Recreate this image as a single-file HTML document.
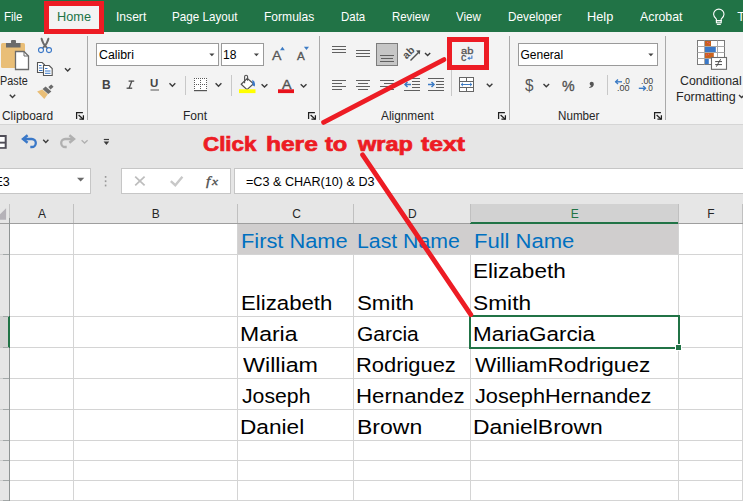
<!DOCTYPE html>
<html><head><meta charset="utf-8"><style>
html,body{margin:0;padding:0;}
body{width:743px;height:501px;overflow:hidden;position:relative;background:#fff;font-family:"Liberation Sans",sans-serif;}
.t{position:absolute;white-space:pre;transform-origin:0 0;}
.a{position:absolute;}
.ov{position:absolute;left:0;top:0;}

</style></head><body>
<!-- tab bar -->
<div class=a style="left:0;top:0;width:743px;height:32px;background:#217346"></div>
<div class=a style="left:49px;top:6px;width:50px;height:26px;background:#f3f3f3"></div>
<!-- ribbon -->
<div class=a style="left:0;top:32px;width:743px;height:92px;background:#f3f3f3"></div>
<div class=a style="left:0;top:124px;width:743px;height:1px;background:#d5d5d5"></div>
<!-- QAT + formula area -->
<div class=a style="left:0;top:125px;width:743px;height:79px;background:#e6e6e6"></div>
<!-- name box -->
<div class=a style="left:-5px;top:168px;width:94px;height:24px;background:#fff;border:1px solid #c6c6c6"></div>
<div class=a style="left:121px;top:168px;width:108px;height:24px;background:#fff;border:1px solid #c6c6c6"></div>
<div class=a style="left:234px;top:168px;width:520px;height:24px;background:#fff;border:1px solid #c6c6c6"></div>
<!-- column header -->
<div class=a style="left:0;top:204px;width:743px;height:19px;background:#e6e6e6"></div>
<div class=a style="left:470px;top:204px;width:208px;height:19px;background:#d2d2d2"></div>
<div class=a style="left:0;top:223px;width:743px;height:1px;background:#9e9e9e"></div>
<div class=a style="left:470px;top:222px;width:208px;height:2px;background:#217346"></div>
<!-- row header -->
<div class=a style="left:0;top:224px;width:9px;height:277px;background:#e6e6e6"></div>
<div class=a style="left:0;top:317px;width:9px;height:30px;background:#d2d2d2"></div>
<div class=a style="left:9px;top:204px;width:1px;height:14px;background:#c4c4c4"></div><div class=a style="left:9px;top:218px;width:1px;height:283px;background:#8f9494"></div>
<div class=a style="left:8px;top:316px;width:2px;height:32px;background:#217346"></div>
<!-- grid -->
<div class=a style="left:73px;top:204px;width:1px;height:19px;background:#c0c0c0"></div>
<div class=a style="left:73px;top:224px;width:1px;height:277px;background:#d4d4d4"></div>
<div class=a style="left:237px;top:204px;width:1px;height:19px;background:#c0c0c0"></div>
<div class=a style="left:237px;top:224px;width:1px;height:277px;background:#d4d4d4"></div>
<div class=a style="left:353px;top:204px;width:1px;height:19px;background:#c0c0c0"></div>
<div class=a style="left:353px;top:224px;width:1px;height:277px;background:#d4d4d4"></div>
<div class=a style="left:470px;top:204px;width:1px;height:19px;background:#c0c0c0"></div>
<div class=a style="left:470px;top:224px;width:1px;height:277px;background:#d4d4d4"></div>
<div class=a style="left:678px;top:204px;width:1px;height:19px;background:#c0c0c0"></div>
<div class=a style="left:678px;top:224px;width:1px;height:277px;background:#d4d4d4"></div>
<div class=a style="left:742px;top:204px;width:1px;height:19px;background:#c0c0c0"></div>
<div class=a style="left:742px;top:224px;width:1px;height:277px;background:#d4d4d4"></div>
<div class=a style="left:0;top:254px;width:3px;height:1px;background:#cdcdcd"></div><div class=a style="left:3px;top:254px;width:6px;height:1px;background:#a3a8a8"></div>
<div class=a style="left:10px;top:254px;width:733px;height:1px;background:#d4d4d4"></div>
<div class=a style="left:0;top:316px;width:3px;height:1px;background:#cdcdcd"></div><div class=a style="left:3px;top:316px;width:6px;height:1px;background:#a3a8a8"></div>
<div class=a style="left:10px;top:316px;width:733px;height:1px;background:#d4d4d4"></div>
<div class=a style="left:0;top:347px;width:3px;height:1px;background:#cdcdcd"></div><div class=a style="left:3px;top:347px;width:6px;height:1px;background:#a3a8a8"></div>
<div class=a style="left:10px;top:347px;width:733px;height:1px;background:#d4d4d4"></div>
<div class=a style="left:0;top:378px;width:3px;height:1px;background:#cdcdcd"></div><div class=a style="left:3px;top:378px;width:6px;height:1px;background:#a3a8a8"></div>
<div class=a style="left:10px;top:378px;width:733px;height:1px;background:#d4d4d4"></div>
<div class=a style="left:0;top:409px;width:3px;height:1px;background:#cdcdcd"></div><div class=a style="left:3px;top:409px;width:6px;height:1px;background:#a3a8a8"></div>
<div class=a style="left:10px;top:409px;width:733px;height:1px;background:#d4d4d4"></div>
<div class=a style="left:0;top:440px;width:3px;height:1px;background:#cdcdcd"></div><div class=a style="left:3px;top:440px;width:6px;height:1px;background:#a3a8a8"></div>
<div class=a style="left:10px;top:440px;width:733px;height:1px;background:#d4d4d4"></div>
<div class=a style="left:0;top:460px;width:3px;height:1px;background:#cdcdcd"></div><div class=a style="left:3px;top:460px;width:6px;height:1px;background:#a3a8a8"></div>
<div class=a style="left:10px;top:460px;width:733px;height:1px;background:#d4d4d4"></div>
<div class=a style="left:0;top:480px;width:3px;height:1px;background:#cdcdcd"></div><div class=a style="left:3px;top:480px;width:6px;height:1px;background:#a3a8a8"></div>
<div class=a style="left:10px;top:480px;width:733px;height:1px;background:#d4d4d4"></div>
<div class=a style="left:0;top:500px;width:3px;height:1px;background:#cdcdcd"></div><div class=a style="left:3px;top:500px;width:6px;height:1px;background:#a3a8a8"></div>
<div class=a style="left:10px;top:500px;width:733px;height:1px;background:#d4d4d4"></div>
<!-- header fill row 1 -->
<div class=a style="left:238px;top:224px;width:440px;height:30px;background:#d0cece"></div>
<!-- selection -->
<div class=a style="left:469px;top:315px;width:207px;height:30px;border:2px solid #217346"></div>
<div class=a style="left:675px;top:344px;width:5px;height:5px;background:#217346;border:1px solid #fff"></div>

<svg class=ov width="743" height="501" viewBox="0 0 743 501"><g fill="none" stroke-linecap="butt">
<!-- separators -->
<g stroke="#a9a9a9" stroke-width="1">
<line x1="87.5" y1="36" x2="87.5" y2="120"/>
<line x1="319.5" y1="36" x2="319.5" y2="120"/>
<line x1="509.5" y1="36" x2="509.5" y2="120"/>
<line x1="665.5" y1="36" x2="665.5" y2="120"/>
</g>
<g stroke="#c8c8c8" stroke-width="1">
<line x1="185.5" y1="76" x2="185.5" y2="95"/>
<line x1="231.5" y1="75" x2="231.5" y2="96"/>
<line x1="451.5" y1="70" x2="451.5" y2="96"/>
<line x1="607.5" y1="75" x2="607.5" y2="95"/>
</g>
<!-- launchers -->
<g stroke="#1f1f1f" stroke-width="1.25"><path d="M76.6,118.9 V112.6 H82.9"/><path d="M78.6,115 L83.2,119.2"/><path d="M79.4,119.1 H83.4 V115.2"/><path d="M308.6,118.9 V112.6 H314.9"/><path d="M310.6,115 L315.2,119.2"/><path d="M311.4,119.1 H315.4 V115.2"/><path d="M498.6,118.9 V112.6 H504.9"/><path d="M500.6,115 L505.2,119.2"/><path d="M501.4,119.1 H505.4 V115.2"/><path d="M654.6,118.9 V112.6 H660.9"/><path d="M656.6,115 L661.2,119.2"/><path d="M657.4,119.1 H661.4 V115.2"/></g>
<!-- chevrons -->
<g stroke="#3b3b3b" stroke-width="1.4">
<polyline points="9.8,94.8 12.5,97.5 15.2,94.8"/>
<polyline points="65,68.3 67.7,71 70.4,68.3"/>
<polyline points="169.5,83.3 172.4,86.2 175.3,83.3"/>
<polyline points="215.6,83.3 218.5,86.2 221.4,83.3"/>
<polyline points="261.6,84.2 264.5,87.1 267.4,84.2"/>
<polyline points="300.7,84.2 303.6,87.1 306.5,84.2"/>
<polyline points="425,53 427.6,55.6 430.2,53"/>
<polyline points="486.8,83.8 489.6,86.6 492.4,83.8"/>
<polyline points="543.5,84 546.3,86.8 549.1,84"/>
<polyline points="43.2,139.8 45.8,142.4 48.4,139.8"/>
<polyline points="739,95 741.6,97.6 744.2,95"/>
</g>
<g stroke="#b0b0b0" stroke-width="1.3"><polyline points="81.6,140.2 84.6,143 87.6,140.2"/></g>

<g stroke="#fff" stroke-width="1.1" fill="none"><path d="M716.4,20.6 V19.2 Q713.6,16.8 713.6,14.3 A5.2,5.2 0 0 1 724,14.3 Q724,16.8 721.2,19.2 V20.6 Z"/><rect x="716.4" y="20.6" width="4.8" height="2.2"/><line x1="716.8" y1="24.4" x2="720.8" y2="24.4"/></g>
<!-- PASTE -->
<rect x="1" y="43" width="24" height="25" rx="1.5" fill="#e9be77"/>
<rect x="6" y="43" width="14.5" height="4.5" fill="#6b6b6b"/>
<rect x="11" y="40" width="5" height="3.5" rx="1" fill="#6b6b6b"/>
<path d="M15.5,51.5 H24 L28.5,56 V69.5 H15.5 Z" fill="#fff" stroke="#6b6b6b" stroke-width="1.3"/>
<path d="M24,51.5 V56 H28.5" stroke="#6b6b6b" stroke-width="1"/>
<!-- scissors -->
<g stroke="#6b6b6b" stroke-width="1.9" stroke-linecap="round"><path d="M41.6,38.8 Q42.5,43.5 46.8,47.6"/><path d="M48.4,38.8 Q47.5,43.5 43.2,47.6"/></g>
<g stroke="#3a78c8" stroke-width="1.1"><circle cx="41" cy="50.1" r="2.5"/><circle cx="49" cy="50.1" r="2.5"/></g>
<!-- copy -->
<path d="M37.5,62.5 H42.2 L44.5,64.8 V72.5 H37.5 Z" fill="#fff" stroke="#555" stroke-width="1.1"/>
<path d="M43.5,65.5 H49.2 L52.2,68.5 V75.5 H43.5 Z" fill="#fff" stroke="#555" stroke-width="1.1"/>
<g stroke="#3a78c8" stroke-width="1"><line x1="39" y1="65.5" x2="41.5" y2="65.5"/><line x1="39" y1="68" x2="42.5" y2="68"/><line x1="39" y1="70.5" x2="42.5" y2="70.5"/><line x1="45" y1="68.5" x2="47.5" y2="68.5"/><line x1="45" y1="71" x2="50.5" y2="71"/><line x1="45" y1="73.3" x2="50.5" y2="73.3"/></g>
<!-- format painter -->
<path d="M37.1,91.4 L42.3,89.4 L47.8,94.3 L44.3,99 Z" fill="#e9be77"/>
<path d="M42.6,88.9 L45.6,86.4 L51.4,91.4 L48.2,94 Z" fill="#6b6b6b"/>
<path d="M48.3,87.1 L51.3,84.5 L53.6,86.8 L50.6,89.4 Z" fill="#6b6b6b"/>
<!-- FONT -->
<rect x="96.5" y="43.5" width="122" height="22" fill="#fff" stroke="#9a9a9a"/>
<rect x="221.5" y="43.5" width="42" height="22" fill="#fff" stroke="#9a9a9a"/>
<path d="M209.3,53.4 H214.5 L211.9,56.3 Z" fill="#444"/>
<path d="M253.8,53.4 H259 L256.4,56.3 Z" fill="#444"/>
<path d="M280,50.2 L282.4,46.8 L284.8,50.2 Z" fill="#3c7bc4"/>
<path d="M303.9,46.8 L309,46.8 L306.45,50 Z" fill="#3c7bc4"/>
<!-- borders icon -->
<rect x="194" y="78" width="13" height="13" fill="#fff"/><rect x="194" y="78" width="1" height="1" fill="#5a5a5a"/><rect x="196" y="78" width="1" height="1" fill="#5a5a5a"/><rect x="198" y="78" width="1" height="1" fill="#5a5a5a"/><rect x="200" y="78" width="1" height="1" fill="#5a5a5a"/><rect x="202" y="78" width="1" height="1" fill="#5a5a5a"/><rect x="204" y="78" width="1" height="1" fill="#5a5a5a"/><rect x="206" y="78" width="1" height="1" fill="#5a5a5a"/><rect x="194" y="84" width="1" height="1" fill="#5a5a5a"/><rect x="196" y="84" width="1" height="1" fill="#5a5a5a"/><rect x="198" y="84" width="1" height="1" fill="#5a5a5a"/><rect x="200" y="84" width="1" height="1" fill="#5a5a5a"/><rect x="202" y="84" width="1" height="1" fill="#5a5a5a"/><rect x="204" y="84" width="1" height="1" fill="#5a5a5a"/><rect x="206" y="84" width="1" height="1" fill="#5a5a5a"/><rect x="194" y="80" width="1" height="1" fill="#5a5a5a"/><rect x="200" y="80" width="1" height="1" fill="#5a5a5a"/><rect x="206" y="80" width="1" height="1" fill="#5a5a5a"/><rect x="194" y="82" width="1" height="1" fill="#5a5a5a"/><rect x="200" y="82" width="1" height="1" fill="#5a5a5a"/><rect x="206" y="82" width="1" height="1" fill="#5a5a5a"/><rect x="194" y="86" width="1" height="1" fill="#5a5a5a"/><rect x="200" y="86" width="1" height="1" fill="#5a5a5a"/><rect x="206" y="86" width="1" height="1" fill="#5a5a5a"/><rect x="194" y="88" width="1" height="1" fill="#5a5a5a"/><rect x="200" y="88" width="1" height="1" fill="#5a5a5a"/><rect x="206" y="88" width="1" height="1" fill="#5a5a5a"/><rect x="194" y="90" width="13" height="1.2" fill="#555"/>
<!-- fill color -->
<path d="M241.2,84.3 L247.3,78.4 L253.5,83.8 L247,89.6 Z" fill="#fff" stroke="#505050" stroke-width="1.2" stroke-linejoin="round"/>
<path d="M244.6,83.2 V76.8 Q244.6,75.3 246.1,75.3 Q247.6,75.3 247.6,76.8 V80.8" stroke="#505050" stroke-width="1.1"/>
<path d="M252.3,79.8 Q256.2,82 254.6,86.6 Q251.9,85.6 252.4,82.6 Z" fill="#3a78c8"/>
<rect x="239" y="89.3" width="16.5" height="3.8" fill="#ffff00"/>
<!-- font color -->
<rect x="278" y="89.3" width="16" height="3.8" fill="#e8121c"/>
<!-- underline under U -->
<line x1="150.5" y1="90" x2="159" y2="90" stroke="#555" stroke-width="1"/>

<!-- ALIGNMENT -->
<g stroke="#5f5f5f" stroke-width="1">
<line x1="332" y1="46.5" x2="346" y2="46.5"/><line x1="332" y1="49.5" x2="346" y2="49.5"/><line x1="332" y1="52.5" x2="346" y2="52.5"/>
<line x1="356" y1="50.5" x2="370" y2="50.5"/><line x1="356" y1="53.5" x2="370" y2="53.5"/><line x1="356" y1="56.5" x2="370" y2="56.5"/>
</g>
<rect x="376.5" y="43.5" width="21" height="22" fill="#c6c6c6" stroke="#7c7c7c"/>
<g stroke="#5f5f5f" stroke-width="1">
<line x1="380" y1="55.5" x2="394" y2="55.5"/><line x1="381" y1="58.5" x2="393" y2="58.5"/><line x1="380" y1="61.5" x2="394" y2="61.5"/>
<!-- left -->
<line x1="332" y1="80.5" x2="346" y2="80.5"/><line x1="332" y1="83.5" x2="342" y2="83.5"/><line x1="332" y1="86.5" x2="346" y2="86.5"/><line x1="332" y1="89.5" x2="342" y2="89.5"/>
<!-- center -->
<line x1="356" y1="80.5" x2="370" y2="80.5"/><line x1="358" y1="83.5" x2="368" y2="83.5"/><line x1="356" y1="86.5" x2="370" y2="86.5"/><line x1="358" y1="89.5" x2="368" y2="89.5"/>
<!-- right -->
<line x1="380" y1="80.5" x2="394" y2="80.5"/><line x1="384" y1="83.5" x2="394" y2="83.5"/><line x1="380" y1="86.5" x2="394" y2="86.5"/><line x1="384" y1="89.5" x2="394" y2="89.5"/>
<!-- decrease indent -->
<line x1="404" y1="78.5" x2="420" y2="78.5"/><line x1="412" y1="81.5" x2="420" y2="81.5"/><line x1="412" y1="84.5" x2="420" y2="84.5"/><line x1="412" y1="87.5" x2="420" y2="87.5"/><line x1="404" y1="90.5" x2="420" y2="90.5"/>
<!-- increase indent -->
<line x1="428" y1="78.5" x2="444" y2="78.5"/><line x1="436" y1="81.5" x2="444" y2="81.5"/><line x1="436" y1="84.5" x2="444" y2="84.5"/><line x1="436" y1="87.5" x2="444" y2="87.5"/><line x1="428" y1="90.5" x2="444" y2="90.5"/>
</g>
<g stroke="#3c7bc4" stroke-width="1.5"><line x1="405" y1="84.5" x2="411" y2="84.5"/><polyline points="407.5,82 405,84.5 407.5,87"/>
<line x1="428" y1="84.5" x2="434" y2="84.5"/><polyline points="431.5,82 434,84.5 431.5,87"/></g>
<!-- orientation -->
<text x="0" y="0" transform="translate(406.5,59.5) rotate(-45)" font-family="Liberation Sans" font-weight="700" font-size="10.5" fill="#505050">ab</text>
<line x1="410.5" y1="60.5" x2="418.5" y2="52.5" stroke="#505050" stroke-width="1.4"/>
<path d="M416,50.5 L420.2,50.2 L419.8,54.4 Z" fill="#505050"/>
<!-- wrap text icon -->
<path d="M471.9,55.6 V58.3 H469" stroke="#3a78c8" stroke-width="1.1"/>
<path d="M467.2,58.3 L469.6,56.6 V60 Z" fill="#3a78c8"/>
<!-- merge icon -->
<rect x="459.5" y="77.5" width="14" height="14" fill="#fff" stroke="#666"/>
<g stroke="#666"><line x1="459.5" y1="81.5" x2="473.5" y2="81.5"/><line x1="459.5" y1="87.5" x2="473.5" y2="87.5"/><line x1="466.5" y1="77.5" x2="466.5" y2="81.5"/><line x1="466.5" y1="87.5" x2="466.5" y2="91.5"/></g>
<g stroke="#3c7bc4" stroke-width="1"><line x1="461" y1="84.5" x2="472" y2="84.5"/><polyline points="463,82.8 461.2,84.5 463,86.2"/><polyline points="470,82.8 471.8,84.5 470,86.2"/></g>

<!-- NUMBER -->
<rect x="518.5" y="43.5" width="139" height="22" fill="#fff" stroke="#9a9a9a"/>
<path d="M648.3,53.4 H653.5 L650.9,56.3 Z" fill="#444"/>
<g stroke="#3c7bc4" stroke-width="1.4"><line x1="615.5" y1="81.8" x2="622" y2="81.8"/><polyline points="618,79.5 615.7,81.8 618,84.1"/>
<line x1="638.8" y1="88.3" x2="645.5" y2="88.3"/><polyline points="643.2,86 645.5,88.3 643.2,90.6"/></g>

<circle cx="591.7" cy="83.7" r="2.05" fill="#555"/><path d="M593.7,83.9 Q593.9,87.2 589.4,88.1 L589.2,87.2 Q591.5,86.3 591.2,85.2 Z" fill="#555"/>
<g stroke="#4a4a4a" stroke-width="1.3"><line x1="128.6" y1="81.1" x2="134.2" y2="81.1"/><line x1="126.6" y1="88.2" x2="132.2" y2="88.2"/><line x1="131.8" y1="81.1" x2="129.1" y2="88.2"/></g>
<!-- CF icon -->
<rect x="697.5" y="40.5" width="27" height="24" fill="#fff" stroke="#7a7a7a" stroke-width="1"/>
<g stroke="#a8a8a8"><line x1="704.5" y1="40.5" x2="704.5" y2="64.5"/><line x1="717.5" y1="40.5" x2="717.5" y2="64.5"/><line x1="697.5" y1="46.5" x2="724.5" y2="46.5"/><line x1="697.5" y1="52.5" x2="724.5" y2="52.5"/><line x1="697.5" y1="58.5" x2="724.5" y2="58.5"/></g>
<rect x="705" y="41" width="6" height="5" fill="#c8621e"/>
<rect x="705" y="47" width="10.8" height="5" fill="#3a78c8"/>
<rect x="705" y="53" width="8.8" height="5" fill="#c8621e"/>
<rect x="705" y="59" width="3.8" height="5" fill="#3a78c8"/>
<g fill="#f0509a"><rect x="707.2" y="42" width="1" height="1"/><rect x="708.8" y="43.2" width="1" height="1"/><rect x="706.2" y="54.5" width="1" height="1"/><rect x="708" y="53.8" width="1" height="1"/></g>
<rect x="711.5" y="57.5" width="15" height="11.8" fill="#fff" stroke="#6a6a6a" stroke-width="1.1"/>
<g stroke="#4a4a4a" stroke-width="1"><line x1="715.2" y1="61.6" x2="722" y2="61.6"/><line x1="715.2" y1="64.6" x2="722" y2="64.6"/><line x1="720.6" y1="59.2" x2="716.4" y2="66.6"/></g>
<!-- QAT -->
<rect x="-4" y="135" width="10.7" height="13.8" fill="#4f4d57"/><rect x="-4" y="137" width="8.7" height="4.7" fill="#fff"/><rect x="-4" y="143.6" width="8.7" height="3.5" fill="#fff"/>
<path d="M23.5,139 H31.8 A4,4 0 0 1 31.8,147 H30.3" stroke="#3a78c8" stroke-width="2.3"/>
<polyline points="27.6,135.3 23,139 27.6,142.7" stroke="#3a78c8" stroke-width="2.4"/>
<path d="M73.5,139 H65.2 A4,4 0 0 0 65.2,147 H66.7" stroke="#b0b0b0" stroke-width="2.3"/>
<polyline points="69.4,135.3 74,139 69.4,142.7" stroke="#b0b0b0" stroke-width="2.4"/>
<line x1="103.8" y1="139.5" x2="109" y2="139.5" stroke="#3a3a3a" stroke-width="1.2"/>
<path d="M103.6,141.6 H109.2 L106.4,145 Z" fill="#3a3a3a"/>

<path d="M6.1,208.3 V219.8 H-1 V215.2 Z" fill="#b5b2b8"/>
<!-- formula bar -->
<path d="M77,177.8 H84.3 L80.65,181.5 Z" fill="#6a6a6a"/>
<g fill="#9a9a9a"><rect x="104.8" y="176" width="1.6" height="1.8"/><rect x="104.8" y="180.3" width="1.6" height="1.8"/><rect x="104.8" y="184.6" width="1.6" height="1.8"/></g>
<g stroke="#bdbdbd" stroke-width="1.7"><line x1="135.2" y1="176.6" x2="144.6" y2="185.4"/><line x1="144.6" y1="176.6" x2="135.2" y2="185.4"/></g>
<polyline points="170.8,181.2 175.3,185.2 182.4,176.8" stroke="#c8c8c8" stroke-width="2.4"/>
</g>
</svg>
<span class=t style='font-family:"Liberation Sans", sans-serif;font-style:normal;left:3.60px;top:11.00px;font-size:12.6px;line-height:12.6px;color:#ffffff;font-weight:400;transform:scaleX(0.9120);'>File</span><span class=t style='font-family:"Liberation Sans", sans-serif;font-style:normal;left:56.90px;top:11.00px;font-size:12.6px;line-height:12.6px;color:#217346;font-weight:400;transform:scaleX(1.0111);'>Home</span><span class=t style='font-family:"Liberation Sans", sans-serif;font-style:normal;left:115.64px;top:11.00px;font-size:12.6px;line-height:12.6px;color:#ffffff;font-weight:400;transform:scaleX(0.9602);'>Insert</span><span class=t style='font-family:"Liberation Sans", sans-serif;font-style:normal;left:172.12px;top:11.00px;font-size:12.6px;line-height:12.6px;color:#ffffff;font-weight:400;transform:scaleX(0.9252);'>Page Layout</span><span class=t style='font-family:"Liberation Sans", sans-serif;font-style:normal;left:264.44px;top:11.00px;font-size:12.6px;line-height:12.6px;color:#ffffff;font-weight:400;transform:scaleX(0.9573);'>Formulas</span><span class=t style='font-family:"Liberation Sans", sans-serif;font-style:normal;left:340.61px;top:11.00px;font-size:12.6px;line-height:12.6px;color:#ffffff;font-weight:400;transform:scaleX(0.9112);'>Data</span><span class=t style='font-family:"Liberation Sans", sans-serif;font-style:normal;left:391.81px;top:11.00px;font-size:12.6px;line-height:12.6px;color:#ffffff;font-weight:400;transform:scaleX(0.9077);'>Review</span><span class=t style='font-family:"Liberation Sans", sans-serif;font-style:normal;left:456.14px;top:11.00px;font-size:12.6px;line-height:12.6px;color:#ffffff;font-weight:400;transform:scaleX(0.9175);'>View</span><span class=t style='font-family:"Liberation Sans", sans-serif;font-style:normal;left:507.51px;top:11.00px;font-size:12.6px;line-height:12.6px;color:#ffffff;font-weight:400;transform:scaleX(0.9329);'>Developer</span><span class=t style='font-family:"Liberation Sans", sans-serif;font-style:normal;left:586.88px;top:11.00px;font-size:12.6px;line-height:12.6px;color:#ffffff;font-weight:400;transform:scaleX(1.0140);'>Help</span><span class=t style='font-family:"Liberation Sans", sans-serif;font-style:normal;left:639.79px;top:11.00px;font-size:12.6px;line-height:12.6px;color:#ffffff;font-weight:400;transform:scaleX(0.9784);'>Acrobat</span><span class=t style='font-family:"Liberation Sans", sans-serif;font-style:normal;left:737.26px;top:11.00px;font-size:12.6px;line-height:12.6px;color:#ffffff;font-weight:400;'>T</span><span class=t style='font-family:"Liberation Sans", sans-serif;font-style:normal;left:2.20px;top:110.00px;font-size:12px;line-height:12px;color:#262626;font-weight:400;transform:scaleX(0.9940);'>Clipboard</span><span class=t style='font-family:"Liberation Sans", sans-serif;font-style:normal;left:183.19px;top:110.00px;font-size:12px;line-height:12px;color:#262626;font-weight:400;transform:scaleX(1.0039);'>Font</span><span class=t style='font-family:"Liberation Sans", sans-serif;font-style:normal;left:380.79px;top:110.00px;font-size:12px;line-height:12px;color:#262626;font-weight:400;transform:scaleX(0.9883);'>Alignment</span><span class=t style='font-family:"Liberation Sans", sans-serif;font-style:normal;left:558.47px;top:110.00px;font-size:12px;line-height:12px;color:#262626;font-weight:400;transform:scaleX(0.9700);'>Number</span><span class=t style='font-family:"Liberation Sans", sans-serif;font-style:normal;left:-0.27px;top:75.00px;font-size:12.5px;line-height:12.5px;color:#262626;font-weight:400;transform:scaleX(0.8656);'>Paste</span><span class=t style='font-family:"Liberation Sans", sans-serif;font-style:normal;left:679.85px;top:75.00px;font-size:12.5px;line-height:12.5px;color:#262626;font-weight:400;transform:scaleX(0.9858);'>Conditional</span><span class=t style='font-family:"Liberation Sans", sans-serif;font-style:normal;left:675.69px;top:91.00px;font-size:12.5px;line-height:12.5px;color:#262626;font-weight:400;transform:scaleX(0.9988);'>Formatting</span><span class=t style='font-family:"Liberation Sans", sans-serif;font-style:normal;left:98.88px;top:49.00px;font-size:12px;line-height:12px;color:#000;font-weight:400;transform:scaleX(1.0258);'>Calibri</span><span class=t style='font-family:"Liberation Sans", sans-serif;font-style:normal;left:223.30px;top:49.00px;font-size:12px;line-height:12px;color:#000;font-weight:400;transform:scaleX(1.0058);'>18</span><span class=t style='font-family:"Liberation Sans", sans-serif;font-style:normal;left:520.46px;top:49.00px;font-size:12px;line-height:12px;color:#000;font-weight:400;'>General</span><span class=t style='font-family:"Liberation Sans", sans-serif;font-style:normal;left:-5.50px;top:176.00px;font-size:12.5px;line-height:12.5px;color:#000;font-weight:400;'>E3</span><span class=t style='font-family:"Liberation Sans", sans-serif;font-style:normal;left:245.80px;top:176.00px;font-size:12.5px;line-height:12.5px;color:#000;font-weight:400;transform:scaleX(1.0087);'>=C3 &amp; CHAR(10) &amp; D3</span><span class=t style='font-family:"Liberation Sans", sans-serif;font-style:normal;left:37.88px;top:208.00px;font-size:12px;line-height:12px;color:#262626;font-weight:400;'>A</span><span class=t style='font-family:"Liberation Sans", sans-serif;font-style:normal;left:151.66px;top:208.00px;font-size:12px;line-height:12px;color:#262626;font-weight:400;'>B</span><span class=t style='font-family:"Liberation Sans", sans-serif;font-style:normal;left:292.15px;top:208.00px;font-size:12px;line-height:12px;color:#262626;font-weight:400;'>C</span><span class=t style='font-family:"Liberation Sans", sans-serif;font-style:normal;left:407.95px;top:208.00px;font-size:12px;line-height:12px;color:#262626;font-weight:400;'>D</span><span class=t style='font-family:"Liberation Sans", sans-serif;font-style:normal;left:570.71px;top:208.00px;font-size:12px;line-height:12px;color:#217346;font-weight:400;'>E</span><span class=t style='font-family:"Liberation Sans", sans-serif;font-style:normal;left:707.23px;top:208.00px;font-size:12px;line-height:12px;color:#262626;font-weight:400;'>F</span><span class=t style='font-family:"Liberation Sans", sans-serif;font-style:normal;left:240.55px;top:231.00px;font-size:20.5px;line-height:20.5px;color:#0070c0;font-weight:400;transform:scaleX(1.0643);'>First Name</span><span class=t style='font-family:"Liberation Sans", sans-serif;font-style:normal;left:357.08px;top:231.00px;font-size:20.5px;line-height:20.5px;color:#0070c0;font-weight:400;transform:scaleX(1.0377);'>Last Name</span><span class=t style='font-family:"Liberation Sans", sans-serif;font-style:normal;left:473.68px;top:231.00px;font-size:20.5px;line-height:20.5px;color:#0070c0;font-weight:400;transform:scaleX(1.0742);'>Full Name</span><span class=t style='font-family:"Liberation Sans", sans-serif;font-style:normal;left:240.63px;top:293.00px;font-size:20.5px;line-height:20.5px;color:#000;font-weight:400;transform:scaleX(1.0832);'>Elizabeth</span><span class=t style='font-family:"Liberation Sans", sans-serif;font-style:normal;left:356.67px;top:293.00px;font-size:20.5px;line-height:20.5px;color:#000;font-weight:400;transform:scaleX(1.0876);'>Smith</span><span class=t style='font-family:"Liberation Sans", sans-serif;font-style:normal;left:240.43px;top:324.00px;font-size:20.5px;line-height:20.5px;color:#000;font-weight:400;transform:scaleX(1.1218);'>Maria</span><span class=t style='font-family:"Liberation Sans", sans-serif;font-style:normal;left:357.13px;top:324.00px;font-size:20.5px;line-height:20.5px;color:#000;font-weight:400;transform:scaleX(1.0228);'>Garcia</span><span class=t style='font-family:"Liberation Sans", sans-serif;font-style:normal;left:473.19px;top:324.00px;font-size:20.5px;line-height:20.5px;color:#000;font-weight:400;transform:scaleX(1.0934);'>MariaGarcia</span><span class=t style='font-family:"Liberation Sans", sans-serif;font-style:normal;left:242.81px;top:355.00px;font-size:20.5px;line-height:20.5px;color:#000;font-weight:400;transform:scaleX(1.1353);'>William</span><span class=t style='font-family:"Liberation Sans", sans-serif;font-style:normal;left:355.94px;top:355.00px;font-size:20.5px;line-height:20.5px;color:#000;font-weight:400;transform:scaleX(1.0682);'>Rodriguez</span><span class=t style='font-family:"Liberation Sans", sans-serif;font-style:normal;left:474.51px;top:355.00px;font-size:20.5px;line-height:20.5px;color:#000;font-weight:400;transform:scaleX(1.0984);'>WilliamRodriguez</span><span class=t style='font-family:"Liberation Sans", sans-serif;font-style:normal;left:241.93px;top:386.00px;font-size:20.5px;line-height:20.5px;color:#000;font-weight:400;transform:scaleX(1.0353);'>Joseph</span><span class=t style='font-family:"Liberation Sans", sans-serif;font-style:normal;left:355.83px;top:386.00px;font-size:20.5px;line-height:20.5px;color:#000;font-weight:400;transform:scaleX(1.0839);'>Hernandez</span><span class=t style='font-family:"Liberation Sans", sans-serif;font-style:normal;left:474.52px;top:386.00px;font-size:20.5px;line-height:20.5px;color:#000;font-weight:400;transform:scaleX(1.0592);'>JosephHernandez</span><span class=t style='font-family:"Liberation Sans", sans-serif;font-style:normal;left:240.49px;top:417.00px;font-size:20.5px;line-height:20.5px;color:#000;font-weight:400;transform:scaleX(1.1046);'>Daniel</span><span class=t style='font-family:"Liberation Sans", sans-serif;font-style:normal;left:356.62px;top:417.00px;font-size:20.5px;line-height:20.5px;color:#000;font-weight:400;transform:scaleX(1.1222);'>Brown</span><span class=t style='font-family:"Liberation Sans", sans-serif;font-style:normal;left:473.04px;top:417.00px;font-size:20.5px;line-height:20.5px;color:#000;font-weight:400;transform:scaleX(1.1162);'>DanielBrown</span><span class=t style='font-family:"Liberation Sans", sans-serif;font-style:normal;left:473.12px;top:261.00px;font-size:20.5px;line-height:20.5px;color:#000;font-weight:400;transform:scaleX(1.0999);'>Elizabeth</span><span class=t style='font-family:"Liberation Sans", sans-serif;font-style:normal;left:472.99px;top:293.00px;font-size:20.5px;line-height:20.5px;color:#000;font-weight:400;transform:scaleX(1.1087);'>Smith</span><span class=t style='font-family:"Liberation Sans", sans-serif;font-style:normal;left:202.85px;top:134.00px;font-size:20px;line-height:20px;color:#ed1c24;font-weight:700;transform:scaleX(1.1184);-webkit-text-stroke:0.7px #ed1c24;'>Click</span><span class=t style='font-family:"Liberation Sans", sans-serif;font-style:normal;left:265.96px;top:134.00px;font-size:20px;line-height:20px;color:#ed1c24;font-weight:700;transform:scaleX(1.2258);-webkit-text-stroke:0.7px #ed1c24;'>here</span><span class=t style='font-family:"Liberation Sans", sans-serif;font-style:normal;left:325.37px;top:134.00px;font-size:20px;line-height:20px;color:#ed1c24;font-weight:700;transform:scaleX(1.1816);-webkit-text-stroke:0.7px #ed1c24;'>to</span><span class=t style='font-family:"Liberation Sans", sans-serif;font-style:normal;left:357.56px;top:134.00px;font-size:20px;line-height:20px;color:#ed1c24;font-weight:700;transform:scaleX(1.1742);-webkit-text-stroke:0.7px #ed1c24;'>wrap</span><span class=t style='font-family:"Liberation Sans", sans-serif;font-style:normal;left:420.55px;top:134.00px;font-size:20px;line-height:20px;color:#ed1c24;font-weight:700;transform:scaleX(1.2376);-webkit-text-stroke:0.7px #ed1c24;'>text</span><span class=t style='font-family:"Liberation Sans", sans-serif;font-style:normal;left:101.92px;top:79.00px;font-size:12px;line-height:12px;color:#444;font-weight:700;'>B</span><span class=t style='font-family:"Liberation Sans", sans-serif;font-style:normal;left:149.99px;top:78.00px;font-size:11.5px;line-height:11.5px;color:#444;font-weight:700;'>U</span><span class=t style='font-family:"Liberation Sans", sans-serif;font-style:normal;left:272.33px;top:50.00px;font-size:12.5px;line-height:12.5px;color:#555;font-weight:400;transform:scaleX(1.1325);-webkit-text-stroke:0.3px #555;'>A</span><span class=t style='font-family:"Liberation Sans", sans-serif;font-style:normal;left:297.35px;top:51.00px;font-size:10.6px;line-height:10.6px;color:#555;font-weight:400;transform:scaleX(1.0972);-webkit-text-stroke:0.3px #555;'>A</span><span class=t style='font-family:"Liberation Sans", sans-serif;font-style:normal;left:282.02px;top:78.00px;font-size:13.5px;line-height:13.5px;color:#505050;font-weight:400;transform:scaleX(1.0546);-webkit-text-stroke:0.35px #505050;'>A</span><span class=t style='font-family:"Liberation Sans", sans-serif;font-style:normal;left:524.92px;top:78.00px;font-size:16px;line-height:16px;color:#555;font-weight:400;transform:scaleX(0.9536);'>$</span><span class=t style='font-family:"Liberation Sans", sans-serif;font-style:normal;left:561.88px;top:78.00px;font-size:15.5px;line-height:15.5px;color:#505050;font-weight:400;transform:scaleX(0.9148);-webkit-text-stroke:0.35px #505050;'>%</span><span class=t style='font-family:"Liberation Sans", sans-serif;font-style:normal;left:622.84px;top:77.00px;font-size:8.5px;line-height:8.5px;color:#3a3a3a;font-weight:400;transform:scaleX(0.9657);'>.0</span><span class=t style='font-family:"Liberation Sans", sans-serif;font-style:normal;left:617.10px;top:84.00px;font-size:8.5px;line-height:8.5px;color:#3a3a3a;font-weight:400;transform:scaleX(1.0626);'>.00</span><span class=t style='font-family:"Liberation Sans", sans-serif;font-style:normal;left:641.04px;top:77.00px;font-size:8.5px;line-height:8.5px;color:#3a3a3a;font-weight:400;transform:scaleX(1.0333);'>.00</span><span class=t style='font-family:"Liberation Sans", sans-serif;font-style:normal;left:646.04px;top:84.00px;font-size:8.5px;line-height:8.5px;color:#3a3a3a;font-weight:400;transform:scaleX(0.9657);'>.0</span><span class=t style='font-family:"Liberation Sans", sans-serif;font-style:normal;left:460.66px;top:46.00px;font-size:9.5px;line-height:9.5px;color:#555;font-weight:400;transform:scaleX(1.1705);-webkit-text-stroke:0.3px #555;'>ab</span><span class=t style='font-family:"Liberation Sans", sans-serif;font-style:normal;left:461.26px;top:53.00px;font-size:10px;line-height:10px;color:#555;font-weight:400;transform:scaleX(1.0605);-webkit-text-stroke:0.3px #555;'>c</span><span class=t style='font-family:"Liberation Serif", serif;font-style:italic;left:206.39px;top:174.00px;font-size:13.5px;line-height:13.5px;color:#505050;font-weight:400;transform:scaleX(1.1609);-webkit-text-stroke:0.3px #505050;'>f</span><span class=t style='font-family:"Liberation Serif", serif;font-style:italic;left:211.84px;top:176.00px;font-size:11px;line-height:11px;color:#505050;font-weight:400;transform:scaleX(1.2410);-webkit-text-stroke:0.3px #505050;'>x</span>
<svg class=ov width="743" height="501" viewBox="0 0 743 501"><g stroke="#ed1c24" stroke-width="4.8" stroke-linecap="round" fill="none"><line x1="323.6" y1="122.4" x2="444" y2="59.6"/><line x1="362.6" y1="154.8" x2="470.8" y2="314.6"/></g><g stroke="#ed1c24" stroke-width="5" fill="none"><rect x="46.5" y="3.5" width="55" height="28"/><rect x="449.5" y="39.5" width="37" height="28"/></g></svg>
</body></html>
